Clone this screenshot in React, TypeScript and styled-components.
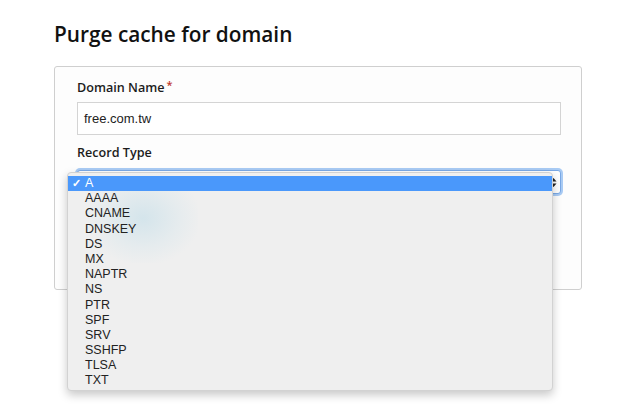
import React from "react";
import styled, { createGlobalStyle } from "styled-components";

const GlobalStyle = createGlobalStyle`
  html, body {
    margin: 0;
    padding: 0;
    background: #ffffff;
  }
  body {
    font-family: "Open Sans", "Liberation Sans", sans-serif;
    color: #1a1a1a;
  }
`;

const Page = styled.div`
  width: 640px;
  height: 416px;
  padding: 19px 0 0 54px;
  box-sizing: border-box;
  overflow: hidden;
`;

const Title = styled.h1`
  margin: 0 0 17px;
  font-family: "Open Sans", sans-serif;
  font-size: 20.8px;
  font-weight: 600;
  line-height: 30px;
  color: #111;
`;

const Panel = styled.div`
  width: 528px;
  height: 224px;
  box-sizing: border-box;
  border: 1px solid #cfcfcf;
  border-radius: 3px;
  background: #fdfdfd;
  padding: 12px 20px 0 22px;
`;

const Field = styled.div`
  display: flex;
  flex-direction: column;
  margin-bottom: 9px;
`;

const Label = styled.label`
  font-family: "Open Sans", sans-serif;
  font-size: 12.6px;
  font-weight: 600;
  line-height: 18px;
  margin-bottom: 5px;
  color: #1c1c1c;
`;

const Required = styled.span`
  color: #c0392b;
  font-size: 11px;
  vertical-align: top;
  margin-left: 2px;
  line-height: 12px;
`;

const TextInput = styled.div`
  height: 33px;
  box-sizing: border-box;
  border: 1px solid #d4d4d4;
  background: #fff;
  padding: 0 6px;
  display: flex;
  align-items: center;
  font-family: "Liberation Sans", Arial, sans-serif;
  font-size: 13px;
  color: #222;
`;

const SelectWrap = styled.div`
  position: relative;
  margin-top: 3px;
`;

const SelectBox = styled.div`
  height: 24px;
  box-sizing: border-box;
  border: 1px solid #7aa9e6;
  border-radius: 3px;
  box-shadow: 0 0 0 2px #a9cbf4;
  background: #fff;
  display: flex;
  justify-content: flex-end;
  align-items: center;
  padding-right: 3px;
`;

const Arrows = styled.svg`
  width: 7px;
  height: 11px;
`;

const Menu = styled.ul`
  position: absolute;
  left: -10px;
  top: 2px;
  width: 486px;
  height: 219px;
  box-sizing: border-box;
  margin: 0;
  padding: 3px 0 0;
  list-style: none;
  background: #efefef;
  border: 1px solid #d2d2d2;
  border-radius: 4px;
  box-shadow: 0 4px 10px rgba(0, 0, 0, 0.22);
  overflow: hidden;
  &::before {
    content: "";
    position: absolute;
    left: 20px;
    top: 0;
    width: 110px;
    height: 90px;
    background: radial-gradient(ellipse at center, rgba(190, 220, 232, 0.55) 0%, rgba(200, 225, 235, 0.25) 45%, rgba(239, 239, 239, 0) 75%);
    pointer-events: none;
  }
`;

const Option = styled.li<{ $active?: boolean }>`
  position: relative;
  height: 15.2px;
  line-height: 15px;
  padding-left: 17px;
  font-family: "Liberation Sans", Arial, sans-serif;
  font-size: 12.5px;
  color: ${(p) => (p.$active ? "#fff" : "#222")};
  background: ${(p) => (p.$active ? "#4a98fb" : "transparent")};
`;

const Check = styled.span`
  position: absolute;
  left: 4px;
  top: 0;
  font-size: 11px;
  font-weight: bold;
`;

const types = ["A", "AAAA", "CNAME", "DNSKEY", "DS", "MX", "NAPTR", "NS", "PTR", "SPF", "SRV", "SSHFP", "TLSA", "TXT"];

export default function App() {
  return (
    <Page>
      <GlobalStyle />
      <Title>Purge cache for domain</Title>
      <Panel>
        <Field>
          <Label>
            Domain Name<Required>*</Required>
          </Label>
          <TextInput>free.com.tw</TextInput>
        </Field>
        <Field>
          <Label>Record Type</Label>
          <SelectWrap>
            <SelectBox>
              <Arrows viewBox="0 0 7 11">
                <path d="M3.5 1 L6.5 4.5 H0.5 Z M3.5 10 L6.5 6.5 H0.5 Z" fill="#222" />
              </Arrows>
            </SelectBox>
            <Menu>
              {types.map((t) => (
                <Option key={t} $active={t === "A"}>
                  {t === "A" && <Check>✓</Check>}
                  {t}
                </Option>
              ))}
            </Menu>
          </SelectWrap>
        </Field>
      </Panel>
    </Page>
  );
}
